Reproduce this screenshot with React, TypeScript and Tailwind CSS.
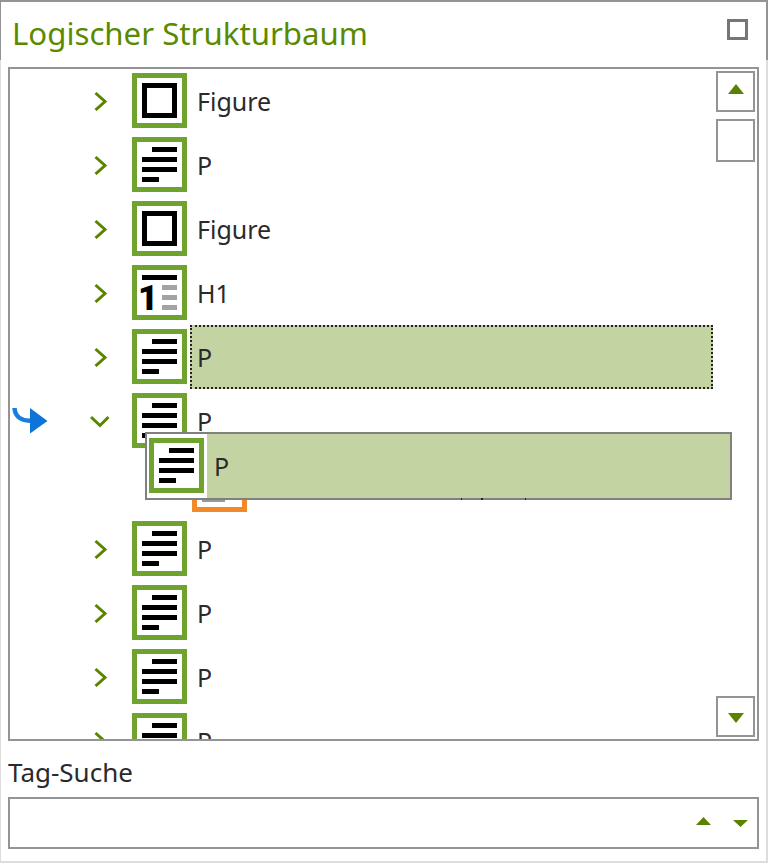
const GREY = 'border-[#949494]';

function TagIcon({ kind, borderClass = 'border-[#70a22f]' }: { kind: string; borderClass?: string }) {
  return (
    <div className={`w-[55px] h-[55px] shrink-0 border-[5px] bg-white ${borderClass}`}>
      <svg width="45" height="45" viewBox="0 0 45 45" className="block">
        {kind === 'figure' && <rect x="7.5" y="7.5" width="30" height="30" fill="none" stroke="#000" strokeWidth="5" />}
        {kind === 'p' && (
          <g fill="#000">
            <rect x="15" y="5" width="25" height="5" />
            <rect x="5" y="15" width="35" height="5" />
            <rect x="5" y="25" width="35" height="5" />
            <rect x="5" y="35" width="17" height="5" />
          </g>
        )}
        {kind === 'h1' && (
          <g>
            <rect x="5" y="5" width="35" height="5" fill="#000" />
            <text x="1" y="40" fontSize="35" fontWeight="900" fontFamily="Roboto, sans-serif" fill="#000">1</text>
            <rect x="25" y="15" width="15" height="5" fill="#a3a3a3" />
            <rect x="25" y="25" width="15" height="5" fill="#a3a3a3" />
            <rect x="25" y="35" width="15" height="5" fill="#a3a3a3" />
          </g>
        )}
        {kind === 'hidden' && <rect x="5" y="35" width="23" height="5" fill="#999" />}
      </svg>
    </div>
  );
}

function Chevron({ open }: { open?: boolean }) {
  return (
    <svg width="20" height="20" viewBox="0 0 20 20" className="block">
      {open ? (
        <polyline points="1,6 10,14.5 18.5,6" fill="none" stroke="#5a8500" strokeWidth="3" />
      ) : (
        <polyline points="5.5,2 15,10.5 5.5,19" fill="none" stroke="#5a8500" strokeWidth="3" />
      )}
    </svg>
  );
}

function Triangle({ up, w, h }: { up?: boolean; w: number; h: number }) {
  return (
    <svg width={w} height={h} viewBox={`0 0 ${w} ${h}`} className="block">
      <polygon points={up ? `0,${h} ${w},${h} ${w / 2},0` : `0,0 ${w},0 ${w / 2},${h}`} fill="#588200" />
    </svg>
  );
}

function JumpArrow() {
  return (
    <svg width="36" height="26" viewBox="0 0 36 26" className="block ml-[2px]">
      <path d="M2.5 0 C3 9 10 13.5 20 12.5" fill="none" stroke="#1a7ee0" strokeWidth="4.5" />
      <polygon points="18,0 35.5,13 18,25.5" fill="#0f74d9" />
    </svg>
  );
}

function TreeRow({ kind, label, open, jump, selected }: { kind: string; label: string; open?: boolean; jump?: boolean; selected?: boolean }) {
  return (
    <div className="flex h-[64px] shrink-0 pr-[3px]">
      <div className="w-[80px] flex items-center">{jump && <JumpArrow />}</div>
      <div className="w-[42px] flex items-center"><Chevron open={open} /></div>
      <div className="pt-1"><TagIcon kind={kind} /></div>
      <div
        className={`flex-1 ml-[3px] pl-[5px] pt-[2px] flex items-center border-2 ${
          selected ? 'bg-[#c4d3a2] border-dotted border-[#222]' : 'border-transparent'
        }`}
      >
        {label}
      </div>
    </div>
  );
}

export default function App() {
  const before = [
    { kind: 'figure', label: 'Figure' },
    { kind: 'p', label: 'P' },
    { kind: 'figure', label: 'Figure' },
    { kind: 'h1', label: 'H1' },
  ];

  return (
    <div className="w-[768px] h-[863px] flex flex-col bg-white text-[#2a2a2a] text-[25px] font-['Noto_Sans',sans-serif]">
      {/* Kopfzeile */}
      <div className={`h-[60px] shrink-0 flex items-center justify-between border-t-2 border-l border-r-2 ${GREY} pl-[11px] pr-[18px]`}>
        <span className="text-[31.2px] text-[#5a8a00] mt-[4px]">Logischer Strukturbaum</span>
        <div className="w-[21px] h-[21px] border-[3px] border-[#767676] mt-[-4px]"></div>
      </div>

      <div className="flex-1 min-h-0 flex flex-col border-l border-r-2 border-b-2 border-[#dddddd] px-[7px] pt-[7px]">
        {/* Baum */}
        <div className={`relative h-[674px] shrink-0 flex border-2 ${GREY}`}>
          <div className="flex-1 min-w-0 flex flex-col overflow-hidden">
            {before.map((r, i) => (
              <TreeRow key={i} kind={r.kind} label={r.label} />
            ))}
            <TreeRow kind="p" label="P" selected />
            <TreeRow kind="p" label="P" open jump />
            <div className="h-[64px] shrink-0 pl-[182px] pt-1">
              <TagIcon kind="hidden" borderClass="border-[#f28a2c]" />
            </div>
            <TreeRow kind="p" label="P" />
            <TreeRow kind="p" label="P" />
            <TreeRow kind="p" label="P" />
            <TreeRow kind="p" label="P" />
          </div>

          {/* Scrollleiste */}
          <div className="w-[41px] shrink-0 flex flex-col pt-[2px] pb-[2px] pr-[2px]">
            <div className={`h-[41px] border-2 ${GREY} flex justify-center pt-[11px]`}>
              <Triangle up w={16} h={10} />
            </div>
            <div className={`h-[43px] mt-[7px] border-2 ${GREY}`}></div>
            <div className={`h-[41px] mt-auto border-2 ${GREY} flex justify-center pt-[15px]`}>
              <Triangle w={16} h={10} />
            </div>
          </div>

          {/* gezogenes Element */}
          <div className="absolute left-[135px] top-[363px] w-[587px] h-[68px] border-2 border-[#808080] flex bg-white">
            <div className="w-[60px] pl-[2px] pt-1 shrink-0"><TagIcon kind="p" /></div>
            <div className="flex-1 bg-[#c4d3a2] pl-[7px] pt-[2px] flex items-center">P</div>
          </div>
          <span className="absolute left-[451px] top-[429px] w-[1px] h-[2px] bg-[#222]"></span>
          <span className="absolute left-[471px] top-[429px] w-[2px] h-[2px] bg-[#222]"></span>
          <span className="absolute left-[515px] top-[429px] w-[1px] h-[2px] bg-[#222]"></span>
        </div>

        {/* Suche */}
        <div className="h-[56px] shrink-0 pt-[13px] leading-[36px] text-[26px]">Tag-Suche</div>
        <div className={`h-[52px] shrink-0 border-2 ${GREY} flex justify-end items-center gap-[22px] pr-[9px]`}>
          <div className="mt-[-4px]"><Triangle up w={15} h={8} /></div>
          <div className="mt-[1px]"><Triangle w={15} h={7} /></div>
        </div>
      </div>
    </div>
  );
}
